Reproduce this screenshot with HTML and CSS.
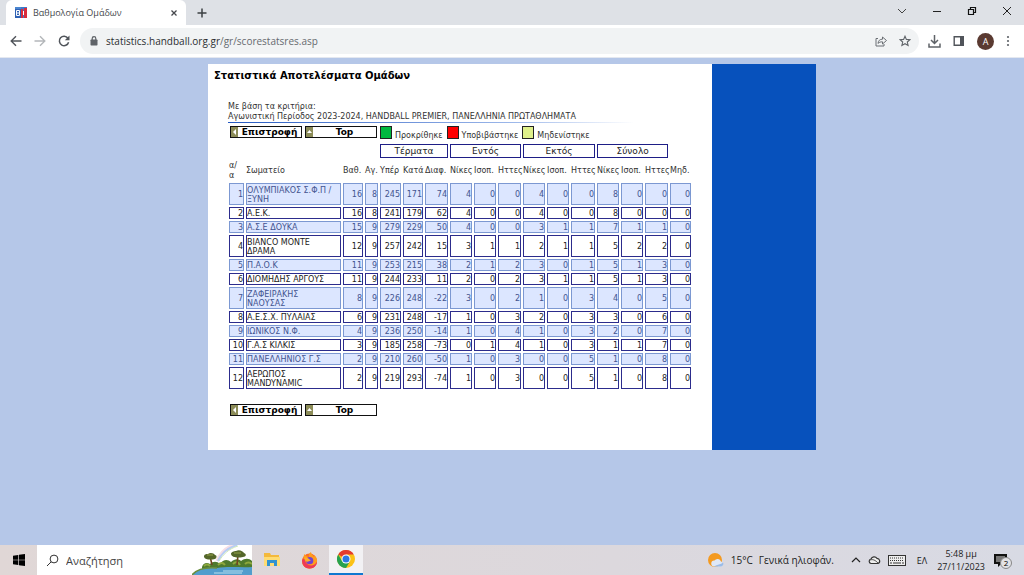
FILE: index.html
```html
<!DOCTYPE html>
<html lang="el">
<head>
<meta charset="utf-8">
<title>Βαθμολογία Ομάδων</title>
<link rel="stylesheet" href="styles.css">
</head>
<body>
<header class="tabstrip">
  <div class="tab">
    <svg class="favicon" width="12" height="11" viewBox="0 0 12 11"><rect width="7" height="11" fill="#2f62b5"/><rect x="6" width="6" height="11" fill="#3f78c8"/><path d="M0 0h6v2H0z" fill="#4b86d0"/><path d="M1.500 3.500h3v5h-3zM1.500 6h3" fill="none" stroke="#fff"/><path d="M6 2h2v2h1V1h3v10H9V8H8v3H6z" fill="#d92c3c"/><path d="M8.500 4v4" stroke="#fff"/></svg>
    <span class="tab-title">Βαθμολογία Ομάδων</span>
    <button class="icon-btn" aria-label="Κλείσιμο καρτέλας"><svg width="8" height="8" viewBox="0 0 8 8"><path d="M1.500 1.500l5 5m0-5l-5 5" stroke="#45484c" stroke-width="1.300"/></svg></button>
  </div>
  <button class="icon-btn new-tab" aria-label="Νέα καρτέλα"><svg width="10" height="10" viewBox="0 0 10 10"><path d="M5 .5v9M.5 5h9" stroke="#3c4043" stroke-width="1.500"/></svg></button>
  <div class="window-controls">
    <button class="icon-btn" aria-label="Αναζήτηση καρτελών"><svg width="10" height="10" viewBox="0 0 10 10"><path d="M1 3l4 4 4-4" fill="none" stroke="#444"/></svg></button>
    <button class="icon-btn" aria-label="Ελαχιστοποίηση"><svg width="10" height="10" viewBox="0 0 10 10"><path d="M1 5.500h8" stroke="#222"/></svg></button>
    <button class="icon-btn" aria-label="Επαναφορά"><svg width="10" height="10" viewBox="0 0 10 10"><path d="M1.500 3.500h5v5h-5zM3.500 3V1.500h5v5H7" fill="none" stroke="#111" stroke-width="1.200"/></svg></button>
    <button class="icon-btn" aria-label="Κλείσιμο"><svg width="10" height="10" viewBox="0 0 10 10"><path d="M1 1l8 8m0-8L1 9" stroke="#222"/></svg></button>
  </div>
</header>
<nav class="toolbar">
  <button class="icon-btn" aria-label="Πίσω"><svg width="12" height="12" viewBox="0 0 12 12"><path d="M11.500 6H1.500M6 1.200L1.200 6 6 10.800" fill="none" stroke="#50545a" stroke-width="1.400"/></svg></button>
  <button class="icon-btn" aria-label="Εμπρός"><svg width="12" height="12" viewBox="0 0 12 12"><path d="M.5 6h10M6 1.200L10.800 6 6 10.800" fill="none" stroke="#b4b7ba" stroke-width="1.400"/></svg></button>
  <button class="icon-btn" aria-label="Ανανέωση"><svg width="12" height="12" viewBox="0 0 12 12"><path d="M9.900 3.200A4.700 4.700 0 1 0 10.600 7.200" fill="none" stroke="#50545a" stroke-width="1.500"/><path d="M11.500.5v4.700H6.800z" fill="#50545a"/></svg></button>
  <div class="omnibox">
    <svg width="8" height="10" viewBox="0 0 8 10"><rect x=".5" y="3.500" width="7" height="6" rx=".7" fill="#5f6368"/><path d="M2.200 4V2.500a1.800 1.800 0 0 1 3.600 0V4" fill="none" stroke="#5f6368" stroke-width="1.200"/></svg>
    <span class="url">statistics.handball.org.gr<span class="url-path">/gr/scorestatsres.asp</span></span>
    <button class="icon-btn" aria-label="Κοινή χρήση"><svg width="12" height="12" viewBox="0 0 12 12"><path d="M3 3.500H1v7.500h8V9M3 8.500c.2-3 2-4.300 4.500-4.300V2l4 3.500-4 3.500V6.800C5.500 6.800 4 7.200 3 8.500z" fill="none" stroke="#6b6f74"/></svg></button>
    <button class="icon-btn" aria-label="Σελιδοδείκτης"><svg width="12" height="12" viewBox="0 0 12 12"><path d="M6 1.200l1.400 3.200 3.500.3-2.600 2.300.8 3.500L6 8.700l-3.100 1.800.8-3.500L1.100 4.700l3.500-.3z" fill="none" stroke="#5f6368" stroke-width="1.100"/></svg></button>
  </div>
  <div class="actions">
    <button class="icon-btn" aria-label="Λήψεις"><svg width="13" height="13" viewBox="0 0 13 13"><path d="M6.500 0v8M3 5l3.500 3.500L10 5M1 8.500V12h11V8.500" fill="none" stroke="#5f6368" stroke-width="1.500"/></svg></button>
    <button class="icon-btn" aria-label="Πλευρικό πλαίσιο"><svg width="12" height="12" viewBox="0 0 12 12"><path d="M1.200 1.700h9v8.600h-9z" fill="none" stroke="#50545a" stroke-width="1.400"/><path d="M7 1h4v10H7z" fill="#50545a"/></svg></button>
    <button class="avatar" aria-label="Προφίλ">Α</button>
    <button class="icon-btn" aria-label="Μενού"><svg width="4" height="12" viewBox="0 0 4 12"><g fill="#5f6368"><circle cx="2" cy="2" r="1.100"/><circle cx="2" cy="6" r="1.100"/><circle cx="2" cy="10" r="1.100"/></g></svg></button>
  </div>
</nav>
<main class="viewport">
  <div class="sheet">
    <section class="content">
      <h1>Στατιστικά Αποτελέσματα Ομάδων</h1>
      <div class="report">
        <p class="criteria">Με βάση τα κριτήρια:<br>Αγωνιστική Περίοδος 2023-2024, HANDBALL PREMIER, ΠΑΝΕΛΛΗΝΙΑ ΠΡΩΤΑΘΛΗΜΑΤΑ</p>
        <div class="rule"></div>
        <div class="controls">
          <a class="nav-link" href="#"><span class="arrow"><svg width="7" height="10" viewBox="0 0 7 10"><path d="M5 2v6L2 5z" fill="#fff"/></svg></span><span class="nav-text">Επιστροφή</span></a>
          <a class="nav-link" href="#"><span class="arrow"><svg width="7" height="10" viewBox="0 0 7 10"><path d="M1 6h5L3.500 3z" fill="#fff"/></svg></span><span class="nav-text">Top</span></a>
          <div class="legend">
            <i class="swatch green"></i><span>Προκρίθηκε</span>
            <i class="swatch red"></i><span>Υποβιβάστηκε</span>
            <i class="swatch yellow"></i><span>Μηδενίστηκε</span>
          </div>
        </div>
        <table class="standings">
          <colgroup><col class="w15"><col class="w95"><col class="w20"><col class="w13"><col class="w21"><col class="w20"><col class="w23"><col class="w22"><col class="w22"><col class="w23"><col class="w22"><col class="w22"><col class="w24"><col class="w22"><col class="w22"><col class="w23"><col class="w21"></colgroup>
          <thead>
            <tr class="groups"><td colspan="4"></td><th colspan="3">Τέρματα</th><th colspan="3">Εντός</th><th colspan="3">Εκτός</th><th colspan="3">Σύνολο</th><td></td></tr>
            <tr class="heads"><th>α/<br>α</th><th>Σωματείο</th><th>Βαθ.</th><th>Αγ.</th><th>Υπέρ</th><th>Κατά</th><th>Διαφ.</th><th>Νίκες</th><th>Ισοπ.</th><th>Ηττες</th><th>Νίκες</th><th>Ισοπ.</th><th>Ηττες</th><th>Νίκες</th><th>Ισοπ.</th><th>Ηττες</th><th>Μηδ.</th></tr>
          </thead>
          <tbody>
            <tr class="tall"><td>1<td>ΟΛΥΜΠΙΑΚΟΣ Σ.Φ.Π /<br>ΞΥΝΗ<td>16<td>8<td>245<td>171<td>74<td>4<td>0<td>0<td>4<td>0<td>0<td>8<td>0<td>0<td>0</tr>
            <tr><td>2<td>Α.Ε.Κ.<td>16<td>8<td>241<td>179<td>62<td>4<td>0<td>0<td>4<td>0<td>0<td>8<td>0<td>0<td>0</tr>
            <tr><td>3<td>Α.Σ.Ε ΔΟΥΚΑ<td>15<td>9<td>279<td>229<td>50<td>4<td>0<td>0<td>3<td>1<td>1<td>7<td>1<td>1<td>0</tr>
            <tr class="tall"><td>4<td>BIANCO MONTE<br>ΔΡΑΜΑ<td>12<td>9<td>257<td>242<td>15<td>3<td>1<td>1<td>2<td>1<td>1<td>5<td>2<td>2<td>0</tr>
            <tr><td>5<td>Π.Α.Ο.Κ<td>11<td>9<td>253<td>215<td>38<td>2<td>1<td>2<td>3<td>0<td>1<td>5<td>1<td>3<td>0</tr>
            <tr><td>6<td>ΔΙΟΜΗΔΗΣ ΑΡΓΟΥΣ<td>11<td>9<td>244<td>233<td>11<td>2<td>0<td>2<td>3<td>1<td>1<td>5<td>1<td>3<td>0</tr>
            <tr class="tall"><td>7<td>ΖΑΦΕΙΡΑΚΗΣ<br>ΝΑΟΥΣΑΣ<td>8<td>9<td>226<td>248<td>-22<td>3<td>0<td>2<td>1<td>0<td>3<td>4<td>0<td>5<td>0</tr>
            <tr><td>8<td>Α.Ε.Σ.Χ. ΠΥΛΑΙΑΣ<td>6<td>9<td>231<td>248<td>-17<td>1<td>0<td>3<td>2<td>0<td>3<td>3<td>0<td>6<td>0</tr>
            <tr><td>9<td>ΙΩΝΙΚΟΣ Ν.Φ.<td>4<td>9<td>236<td>250<td>-14<td>1<td>0<td>4<td>1<td>0<td>3<td>2<td>0<td>7<td>0</tr>
            <tr><td>10<td>Γ.Α.Σ ΚΙΛΚΙΣ<td>3<td>9<td>185<td>258<td>-73<td>0<td>1<td>4<td>1<td>0<td>3<td>1<td>1<td>7<td>0</tr>
            <tr><td>11<td>ΠΑΝΕΛΛΗΝΙΟΣ Γ.Σ<td>2<td>9<td>210<td>260<td>-50<td>1<td>0<td>3<td>0<td>0<td>5<td>1<td>0<td>8<td>0</tr>
            <tr class="tall"><td>12<td>ΑΕΡΩΠΟΣ<br>MANDYNAMIC<td>2<td>9<td>219<td>293<td>-74<td>1<td>0<td>3<td>0<td>0<td>5<td>1<td>0<td>8<td>0</tr>
          </tbody>
        </table>
        <div class="controls">
          <a class="nav-link" href="#"><span class="arrow"><svg width="7" height="10" viewBox="0 0 7 10"><path d="M5 2v6L2 5z" fill="#fff"/></svg></span><span class="nav-text">Επιστροφή</span></a>
          <a class="nav-link" href="#"><span class="arrow"><svg width="7" height="10" viewBox="0 0 7 10"><path d="M1 6h5L3.500 3z" fill="#fff"/></svg></span><span class="nav-text">Top</span></a>
        </div>
      </div>
    </section>
    <aside class="side"></aside>
  </div>
</main>
<footer class="taskbar">
  <button class="icon-btn start" aria-label="Έναρξη"><svg width="12" height="12" viewBox="0 0 12 12"><path d="M0 1.700l5.300-.8v4.800H0zM6 .8l6-.8v5.700H6zM0 6.300h5.300v4.800L0 10.300zM6 6.300h6V12l-6-.8z" fill="#000"/></svg></button>
  <label class="search">
    <svg width="13" height="13" viewBox="0 0 13 13"><circle cx="8" cy="5" r="3.900" fill="none" stroke="#333"/><path d="M5.200 7.800L1 12" stroke="#333"/></svg>
    <input type="text" placeholder="Αναζήτηση" aria-label="Αναζήτηση">
    <svg class="scene" width="60" height="30" viewBox="0 0 60 30">
      <path d="M25 16C28 8 34 2 44-1" fill="none" stroke="#f6dfe6" stroke-width="3"/><path d="M26 16C29 9 35 3 45 0" fill="none" stroke="#b9cdf4" stroke-width="2"/><path d="M27 16C31 10 36 4 46 1" fill="none" stroke="#cfeab8"/>
      <path d="M10 22c1-4 5-5 8-3 3-3 7-3 10 0 3-5 8-5 11-2 4-4 8-3 10-1 4-3 8-3 11 0v9H10z" fill="#4e7a2e"/>
      <path d="M12 21q3-3 6 0M26 20q4-4 7 0M41 19q4-4 7 1M53 19q3-3 7 0" fill="none" stroke="#8ea83e" stroke-width="2"/>
      <path d="M0 30c5-6 13-8 25-7 12-2 25 0 35-1v9z" fill="#519dcd"/><path d="M0 30c5-6 13-8 25-7" fill="none" stroke="#6b8f3c" stroke-width="1.500"/><path d="M31 26h20M22 28h28" fill="none" stroke="#b9e0ef"/>
      <path d="M18 11l2 9M46 10l-1 10" stroke="#70451f" stroke-width="1.600"/>
      <path d="M12 12c0-3 2-3 4-3 2-2 6-1 7 1 2 0 2 3 0 4-4 1-10 1-11-2zM39 9c0-2 3-3 5-3 3-2 7 0 8 2 3 1 2 4-1 4-5 1-11 1-12-3z" fill="#54662a"/><path d="M15 10h6M42 8h7" stroke="#93a046"/>
    </svg>
  </label>
  <button class="task" aria-label="Εξερεύνηση αρχείων"><svg width="16" height="14" viewBox="0 0 16 14"><path d="M0 0h6l1 2h8v11H0z" fill="#f4b93b"/><path d="M0 4h16v9H0z" fill="#ffdc73"/><path d="M3 7h10v6h-3v-3H6v3H3z" fill="#3293cf"/></svg></button>
  <button class="task" aria-label="Firefox"><svg width="17" height="17" viewBox="0 0 17 17"><circle cx="8.500" cy="9" r="7.500" fill="#ff6b28"/><path d="M3 2c0 2 0 3-1.500 5C0 13 4 16.500 8.500 16.500c6 0 8-5 7.500-8.500-.5-3-2-4-3-5 .3 1.500 0 2 0 2-1-2-3-3-3-5-3 2-2 4-2 5-2 0-3-1-5-3z" fill="#ff9d1c"/><path d="M1 8c0 5 3 8.500 7.500 8.500 5 0 7.500-3.500 7.500-7-2 4-6 5-9 3S4 8 3 6z" fill="#ee3b57"/><circle cx="8.700" cy="8.700" r="3.600" fill="#7542cf"/><path d="M3 6c2-1 4 0 5 1 1 .6 1 1 2 1-1 1.500-3 1-4 2-1-1-2-2-3-4z" fill="#ffae26"/></svg></button>
  <button class="task active" aria-label="Chrome"><svg width="18" height="18" viewBox="0 0 18 18"><circle cx="9" cy="9" r="9" fill="#fbc116"/><path d="M9 9L1.200 4.500A9 9 0 0 1 16.800 4.500H9z" fill="#e33b2e"/><path d="M1.200 4.500A9 9 0 0 0 9 18l4-6.800L9 9 5.100 11.200z" fill="#26a150"/><circle cx="9" cy="9" r="4.500" fill="#fff"/><circle cx="9" cy="9" r="3.500" fill="#2b78e4"/></svg></button>
  <div class="tray">
    <svg width="17" height="17" viewBox="0 0 17 17"><circle cx="8" cy="8" r="7" fill="#f49a20"/><path d="M7 14.500a3 3 0 0 1 .5-6 3.700 3.700 0 0 1 6.500 1 2.700 2.700 0 0 1 .3 5z" fill="#dfe8f7"/><path d="M7 14.500h7a2.700 2.700 0 0 0 2-4c-2 2-6 2-9 4z" fill="#9bbce8"/></svg>
    <span class="weather"><span>15°C</span><span>Γενικά ηλιοφάν.</span></span>
    <button class="icon-btn" aria-label="Κρυφά εικονίδια"><svg width="10" height="10" viewBox="0 0 10 10"><path d="M1 7l4-4 4 4" fill="none" stroke="#222" stroke-width="1.200"/></svg></button>
    <svg width="13" height="10" viewBox="0 0 13 10"><path d="M3 8.500a2.300 2.300 0 0 1 0-4.500 3.500 3.500 0 0 1 6-.7 2.700 2.700 0 0 1 1 5.200z" fill="#eee" stroke="#333" stroke-width="1.200"/><path d="M2 5c3-1 5 0 8 3" fill="none" stroke="#555"/></svg>
    <svg width="18" height="11" viewBox="0 0 18 11"><rect x=".5" y=".5" width="17" height="10" fill="#eee" stroke="#333"/><path d="M2 3h14M2 5.500h14" stroke="#333" stroke-dasharray="1 1"/><path d="M2 8h2m1 0h8m1 0h2" stroke="#333"/></svg>
    <span class="lang">ΕΛ</span>
    <time class="clock">5:48 μμ<br>27/11/2023</time>
    <button class="notify" aria-label="Ειδοποιήσεις"><svg width="14" height="14" viewBox="0 0 14 14"><path d="M0 1h13v10H7l-3 3v-3H0z" fill="#111"/><path d="M2 4h9M2 6h9M2 8h6" stroke="#ddd"/></svg><span class="badge">2</span></button>
  </div>
</footer>
</body>
</html>
```
FILE: styles.css
```css
* { box-sizing: border-box; }
body {
  margin: 0;
  min-height: 100vh;
  display: flex;
  flex-direction: column;
  font-family: "Open Sans", "Noto Sans", sans-serif;
  color: #222;
}
button { font: inherit; border: 0; padding: 0; background: none; }
svg { display: block; flex: none; }
.icon-btn { display: flex; align-items: center; justify-content: center; flex: none; }

.tabstrip { display: flex; height: 25px; background: #dee1e6; padding-left: 6px; }
.tab {
  display: flex;
  align-items: center;
  gap: 6px;
  width: 180px;
  padding: 0 8px 0 9px;
  background: #fff;
  border-radius: 6px 6px 0 0;
}
.tab-title { flex: 1; font-size: 9px; color: #45484c; white-space: nowrap; }
.new-tab { margin-left: 11px; }
.window-controls { display: flex; gap: 25px; margin-left: auto; padding: 0 12px 4px 0; }

.toolbar { display: flex; align-items: center; gap: 12px; height: 33px; padding: 0 14px 0 10px; background: #fff; border-bottom: 1px solid #e4e8f0; }
.omnibox {
  display: flex;
  align-items: center;
  gap: 12px;
  flex: 1;
  height: 26px;
  padding: 0 8px 0 10px;
  margin-left: -2px;
  border-radius: 13px;
  background: #f1f3f4;
}
.url { flex: 1; margin-left: -4px; font-size: 10px; color: #2b2d30; }
.url-path { color: #666a6f; }
.actions { display: flex; align-items: center; gap: 12px; margin-left: -3px; }
.avatar { width: 17px; height: 17px; border-radius: 50%; background: #5a3a31; color: #fff; font-size: 9px; line-height: 17px; }

.viewport { flex: 1; background: #b5c7e8; padding-top: 6px; font-family: Verdana, "DejaVu Sans", sans-serif; }
.sheet { display: flex; width: 608px; max-width: 100%; min-height: 386px; margin: 0 auto; }
.content { flex: 1; padding: 5px 6px 32px; background: #fff; }
.side { width: 104px; background: #0751bc; }
h1 { margin: 0; font-size: 10px; line-height: 14px; color: #000; }
.report { padding: 19px 0 0 14px; font-size: 8px; line-height: 10px; }
.criteria { margin: 0; color: #333; }
.rule { height: 1px; margin-bottom: 3px; background: linear-gradient(90deg, #2458c0, #9db8ea 60%, #fff 85%); }
.controls { display: flex; align-items: flex-start; gap: 3px; padding-left: 2px; }
.nav-link { display: flex; width: 72px; height: 12px; border: 1px solid #111; color: #000; background: #fff; text-decoration: none; font-weight: 700; font-size: 9px; line-height: 10px; }
.arrow { background: #8c8c58; }
.nav-text { flex: 1; text-align: center; }
.legend { display: flex; align-items: flex-end; gap: 3px; height: 15px; color: #333; white-space: nowrap; }
.swatch { width: 12px; height: 13px; margin-bottom: 2px; border: 1px solid #222; }
.legend span + .swatch { margin-left: 1px; }
.green { background: #00b83f; }
.red { background: #f00; }
.yellow { background: #dff08a; }

.standings { table-layout: fixed; width: 466px; margin: 1px 0 13px -1px; border-spacing: 2px; }
.w13 { width: 13px; }
.w15 { width: 15px; }
.w20 { width: 20px; }
.w21 { width: 21px; }
.w22 { width: 22px; }
.w23 { width: 23px; }
.w24 { width: 24px; }
.w95 { width: 95px; }
.standings th { padding: 0; font-weight: 400; white-space: nowrap; }
.groups td { padding: 0; }
.groups th { border: 1px solid #1e1e86; font-size: 9px; line-height: 12px; }
.heads th { height: 21px; text-align: left; color: #333; }
.standings tbody td { padding: 1px 0 0; border: 1px solid #2c2c8c; line-height: 9px; text-align: right; white-space: nowrap; color: #222; }
.standings .tall td { height: 22px; }
.standings tbody td:nth-child(2) { text-align: left; }
.standings tbody tr:nth-child(odd) td { background: #dce6ff; border-color: #7c98d2; color: #43548f; }

.taskbar { display: flex; height: 30px; background: linear-gradient(90deg, #e0d7d6, #dcd8dd 60%, #d8dae4); }
.start { width: 37px; }
.search { display: flex; align-items: center; width: 215px; margin-right: 3px; padding-left: 9px; background: #fff; }
.search input { flex: 1; min-width: 0; border: 0; padding: 0 0 0 7px; font: 11px "Open Sans", "Noto Sans", sans-serif; background: none; }
.search input::placeholder { color: #444; opacity: 1; }
.task { display: flex; align-items: center; justify-content: center; width: 34px; margin-right: 3px; }
.active { background: #f2f1f4; border-bottom: 2px solid #0f78d0; }
.tray { display: flex; align-items: center; gap: 7px; margin-left: auto; padding-right: 16px; font-size: 10px; }
.weather { display: flex; gap: 6px; margin-right: 10px; white-space: nowrap; }
.lang { margin: 0 3px 0 4px; font-size: 9px; }
.clock { font-size: 9px; line-height: 13px; text-align: center; }
.notify { position: relative; margin-left: 2px; }
.badge { position: absolute; left: 6px; top: 4px; width: 12px; height: 12px; border: 1px solid #888; border-radius: 50%; background: #e2e2e6; font-size: 8px; line-height: 10px; }
```
